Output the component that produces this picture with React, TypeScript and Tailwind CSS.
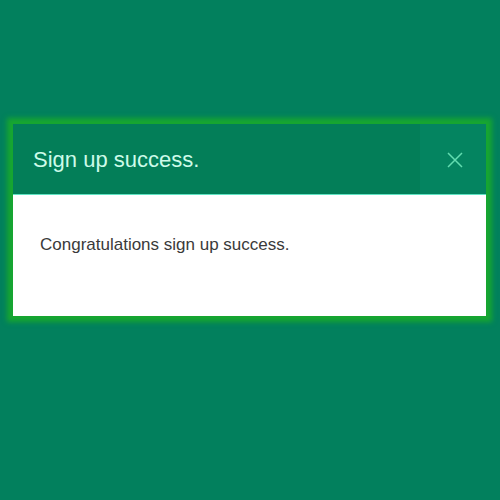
export default function App() {
  return (
    <div className="w-[500px] h-[500px] bg-[#02805d] pt-[124px] px-[13px] font-['Liberation_Sans',Arial,sans-serif]">
      <div className="w-[473px] h-[192px] bg-white flex flex-col shadow-[0_0_5px_6px_#17a630]">
        <div className="h-[71px] bg-[#037e58] flex items-stretch border-b border-[#5fe3c2]">
          <div className="flex-1 flex items-center pl-[20px]">
            <h2 className="text-[22px] text-[#cdfbe9]">Sign up success.</h2>
          </div>
          <button className="w-[66px] bg-[#048460] flex items-center justify-center pl-[4px] pt-[2px]">
            <svg width="16" height="16" viewBox="0 0 16 16" fill="none" stroke="#62dcb0" strokeWidth="1.5">
              <path d="M1 1L15 15M15 1L1 15" />
            </svg>
          </button>
        </div>
        <div className="px-[27px] pt-[37px]">
          <p className="text-[17px] text-[#3a3a3a]">Congratulations sign up success.</p>
        </div>
      </div>
    </div>
  );
}
